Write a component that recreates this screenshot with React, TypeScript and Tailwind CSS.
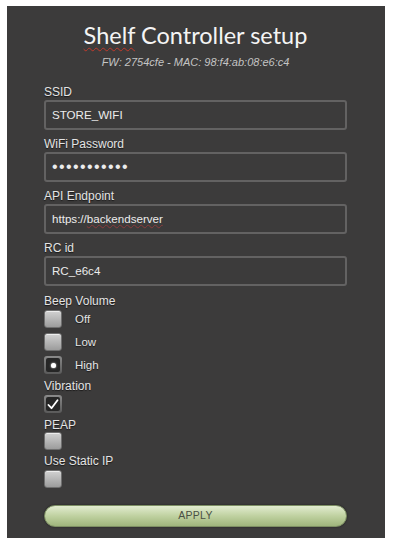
import React from 'react';

const labelCls = "block text-[12px] leading-[14px] text-[#e4e4e4] [text-shadow:0_1px_1px_rgba(0,0,0,0.6)]";
const inputCls = "h-[30px] w-full border-2 border-[#636262] rounded-[3px] flex items-center px-[6px] text-[11.6px] text-[#ececec] bg-[#3c3b3b]";

function Field({ label, children, first }: { label: string; children: React.ReactNode; first?: boolean }) {
    return (
        <div className={first ? "mt-[0px]" : "mt-[7px]"}>
            <span className={`${labelCls} mb-[1px]`}>{label}</span>
            <div className={inputCls}>{children}</div>
        </div>
    );
}

// grey box, or the dark "selected" ones
function Box({ kind }: { kind?: 'dot' | 'check' }) {
    if (kind === 'dot') {
        return (
            <div className="w-[18px] h-[18px] rounded-[3px] bg-gradient-to-b from-[#8a8a8a] to-[#5a5a5a] p-[2px]">
                <div className="w-full h-full rounded-[2px] bg-[#262626] flex items-center justify-center">
                    <div className="w-[5px] h-[5px] rounded-full bg-white shadow-[0_0_2px_#fff]" />
                </div>
            </div>
        );
    }
    if (kind === 'check') {
        return (
            <div className="w-[18px] h-[18px] rounded-[3px] bg-gradient-to-b from-[#8a8a8a] to-[#5a5a5a] p-[2px]">
                <div className="w-full h-full rounded-[2px] bg-[#262626] flex items-center justify-center">
                    <svg width="12" height="11" viewBox="0 0 12 11">
                        <path d="M1.5 6 L4.5 9.2 L10.5 1.2" fill="none" stroke="#fff" strokeWidth="1.8" strokeLinecap="round" strokeLinejoin="round" />
                    </svg>
                </div>
            </div>
        );
    }
    return (
        <div className="w-[18px] h-[18px] rounded-[3px] border border-[#6f6f6f] bg-gradient-to-b from-[#d2d2d2] to-[#9c9c9c] shadow-[inset_0_1px_0_rgba(255,255,255,0.6)]" />
    );
}

function Option({ label, kind }: { label: string; kind?: 'dot' }) {
    return (
        <div className="flex items-center h-[18px]">
            <Box kind={kind} />
            <span className="ml-[13px] mt-[2px] text-[11.5px] text-[#e4e4e4] [text-shadow:0_1px_1px_rgba(0,0,0,0.6)]">{label}</span>
        </div>
    );
}

export default function App() {
    return (
        <div className="w-[394px] h-[546px] bg-white pt-[6px] pl-[7px] font-['Liberation_Sans',Arial,sans-serif]">
            <div className="w-[378px] h-[532px] bg-[#3c3b3b] pl-[37px] pr-[38px]">
                <h1 className="pt-[14px] text-center text-[23.5px] leading-[30px] text-[#f4f4f4] font-['Lato',sans-serif]">
                    <span className="underline decoration-wavy decoration-[#c0392b] decoration-1 underline-offset-[3px]">Shelf</span> Controller setup
                </h1>
                <p className="mt-[6px] text-center text-[11px] leading-[13px] italic text-[#c4c4c4]">
                    FW: 2754cfe - MAC: 98:f4:ab:08:e6:c4
                </p>

                <div className="mt-[16px]">
                    <Field label="SSID" first>STORE_WIFI</Field>
                    <Field label="WiFi Password">
                        <span className="text-[16px] tracking-[1.4px] leading-none">•••••••••••</span>
                    </Field>
                    <Field label="API Endpoint">
                        <span>https://<span className="underline decoration-wavy decoration-[#8a3a3a] decoration-1">backendserver</span></span>
                    </Field>
                    <Field label="RC id">RC_e6c4</Field>
                </div>

                <span className={`${labelCls} mt-[8px]`}>Beep Volume</span>
                <div className="mt-[2px] flex flex-col gap-[5px]">
                    <Option label="Off" />
                    <Option label="Low" />
                    <Option label="High" kind="dot" />
                </div>

                <span className={`${labelCls} mt-[5px]`}>Vibration</span>
                <div className="mt-[2px]"><Box kind="check" /></div>

                <span className={`${labelCls} mt-[5px]`}>PEAP</span>
                <div><Box /></div>

                <span className={`${labelCls} mt-[4px]`}>Use Static IP</span>
                <div className="mt-[2px]"><Box /></div>

                <button className="mt-[17px] w-full h-[22px] rounded-full bg-gradient-to-b from-[#e2ecd0] via-[#bfd1a0] to-[#9fb57c] border border-[#7d8f63] shadow-[0_0_2px_rgba(0,0,0,0.5)] text-[10.5px] text-[#4a4f44] tracking-[0.3px]">
                    APPLY
                </button>
            </div>
        </div>
    );
}
